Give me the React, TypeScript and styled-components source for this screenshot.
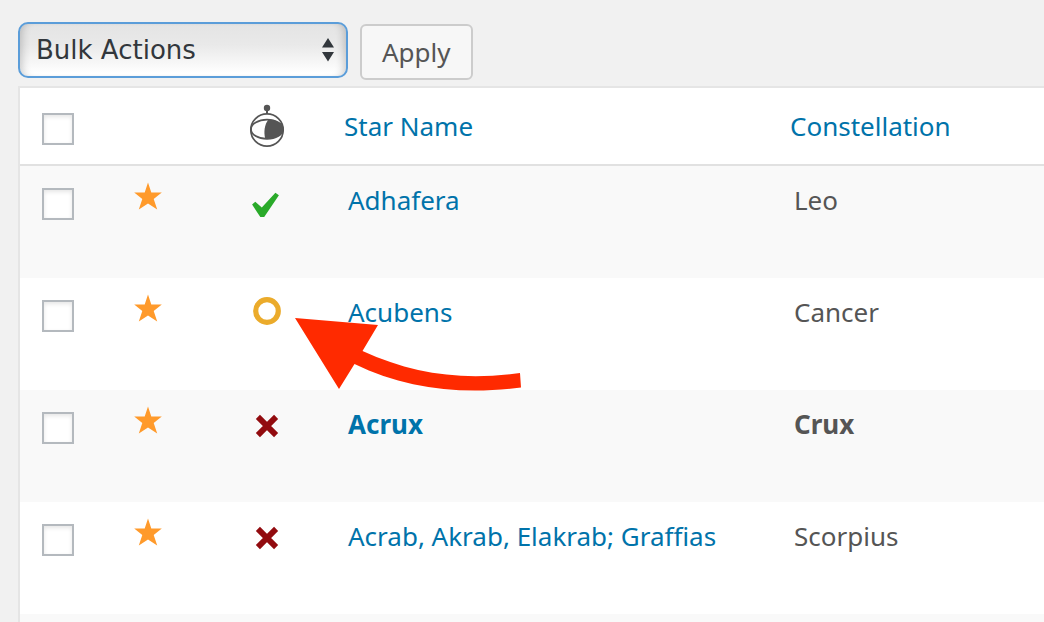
import React from 'react';
import styled, { createGlobalStyle } from 'styled-components';

const GlobalStyle = createGlobalStyle`
  *, *::before, *::after { box-sizing: border-box; }
  body {
    margin: 0;
    background: #f1f1f1;
    color: #555;
    font-family: "Noto Sans", "Open Sans", sans-serif;
    font-size: 26px;
    line-height: 36px;
  }
`;

const Page = styled.main`
  display: flex;
  flex-direction: column;
  min-height: 100vh;
  padding: 22px 0 0 18px;
`;

const Toolbar = styled.form`
  display: flex;
  align-items: flex-start;
  gap: 12px;
  height: 64px;
`;

const SelectBox = styled.label`
  position: relative;
  display: block;
  width: 330px;
`;

const Select = styled.select`
  display: block;
  width: 100%;
  height: 56px;
  padding: 0 48px 0 16px;
  appearance: none;
  border: 2px solid #5b9dd9;
  border-radius: 10px;
  background: linear-gradient(#e4e4e4, #e9e9e9 40%, #fff 95%);
  box-shadow: inset 8px 0 8px -6px rgba(0, 0, 0, 0.2), inset -8px 0 8px -6px rgba(0, 0, 0, 0.2);
  color: #32373c;
  font: 26px "DejaVu Sans", sans-serif;
  outline: none;
`;

const SelectArrows = styled.svg`
  position: absolute;
  right: 14px;
  top: 16px;
  width: 12px;
  height: 24px;
  fill: #32373c;
  pointer-events: none;
`;

const ApplyButton = styled.button`
  height: 56px;
  margin-top: 2px;
  padding: 0 20px;
  border: 2px solid #ccc;
  border-radius: 6px;
  background: #f7f7f7;
  color: #555;
  font: inherit;
`;

const Panel = styled.section`
  flex: 1;
  border: solid #e5e5e5;
  border-width: 2px 0 0 2px;
  background: #f9f9f9;
`;

const Table = styled.table`
  width: 100%;
  table-layout: fixed;
  border-spacing: 0;
`;

const Col = styled.col<{ $width?: number }>`
  width: ${(p) => (p.$width ? `${p.$width}px` : 'auto')};
`;

const HeadCell = styled.th<{ $kind?: 'check' | 'icon' }>`
  height: 78px;
  padding: ${(p) => (p.$kind === 'check' ? '25px 0 0 22px' : p.$kind === 'icon' ? '16px 0 0' : '20px 16px 0')};
  border-bottom: 2px solid #e1e1e1;
  background: #fff;
  font-weight: 400;
  text-align: ${(p) => (p.$kind === 'icon' ? 'center' : 'left')};
  vertical-align: top;
`;

const Row = styled.tr<{ $strong?: boolean }>`
  background: #fff;
  font-weight: ${(p) => (p.$strong ? 700 : 400)};
  &:nth-child(odd) { background: #f9f9f9; }
`;

const Cell = styled.td<{ $kind?: 'check' | 'icon' }>`
  height: 112px;
  padding: ${(p) => (p.$kind === 'check' ? '22px 0 0 22px' : p.$kind === 'icon' ? '16px 0 0' : '16px 20px 0')};
  text-align: ${(p) => (p.$kind === 'icon' ? 'center' : 'left')};
  vertical-align: top;
  white-space: nowrap;
`;

const Checkbox = styled.input`
  display: block;
  width: 32px;
  height: 32px;
  margin: 0;
  appearance: none;
  border: 2px solid #b4b9be;
  background: #fff;
  box-shadow: inset 0 2px 4px rgba(0, 0, 0, 0.1);
`;

const Link = styled.a`
  color: #0073aa;
  text-decoration: none;
`;

const StarButton = styled.button`
  display: block;
  width: 28px;
  height: 28px;
  margin: 0 auto;
  padding: 0;
  border: 0;
  background: none;
`;

const Glyph = styled.svg<{ $w: number; $h: number }>`
  display: block;
  width: ${(p) => p.$w}px;
  height: ${(p) => p.$h}px;
  margin: 0 auto;
`;

const StatusMark = styled.div`
  position: relative;
  width: 30px;
  margin: 0 auto;
`;

const Pointer = styled.svg`
  position: absolute;
  left: 42px;
  top: 22px;
  width: 230px;
  height: 76px;
  fill: #ff2a00;
  pointer-events: none;
`;

type Status = 'yes' | 'partial' | 'no';

const stars: { name: string; constellation: string; status: Status; strong?: boolean; pointed?: boolean }[] = [
  { name: 'Adhafera', constellation: 'Leo', status: 'yes' },
  { name: 'Acubens', constellation: 'Cancer', status: 'partial', pointed: true },
  { name: 'Acrux', constellation: 'Crux', status: 'no', strong: true },
  { name: 'Acrab, Akrab, Elakrab; Graffias', constellation: 'Scorpius', status: 'no' },
];

function Globe() {
  return (
    <Glyph $w={36} $h={44} viewBox="0 0 36 44" role="img" aria-label="Status">
      <circle cx="18" cy="4" r="3.2" fill="#555" />
      <path d="M18 4v6" stroke="#555" strokeWidth="2" />
      <circle cx="18" cy="26" r="16.2" fill="none" stroke="#555" strokeWidth="1.7" />
      <ellipse cx="18" cy="25.2" rx="16" ry="9.6" fill="none" stroke="#555" strokeWidth="1.7" />
      <path d="M19.5 15.6C28 15.8 34 20 34.5 25.2C34 30.5 28 34.6 16.2 34.8C14.5 28 15.5 20.5 19.5 15.6Z" fill="#555" />
    </Glyph>
  );
}

function StatusIcon({ status }: { status: Status }) {
  return (
    <Glyph $w={30} $h={36} viewBox="0 0 30 36" role="img" aria-label={status}>
      {status === 'yes' && (
        <path d="M.1 22.5L3.3 19.8L9.8 25.6L23.4 10.7L26.9 13.3L12.2 35H8.3Z" fill="#2aaa2a" />
      )}
      {status === 'partial' && <circle cx="15" cy="17" r="11.3" fill="none" stroke="#ebab2b" strokeWidth="5.2" />}
      {status === 'no' && (
        <path d="M5.9 10.9L24.1 29.1M24.1 10.9L5.9 29.1" fill="none" stroke="#920b0f" strokeWidth="5.8" />
      )}
    </Glyph>
  );
}

export default function App() {
  return (
    <>
      <GlobalStyle />
      <Page>
        <Toolbar onSubmit={(e) => e.preventDefault()}>
          <SelectBox>
            <Select aria-label="Select bulk action">
              <option>Bulk Actions</option>
            </Select>
            <SelectArrows viewBox="0 0 12 24" aria-hidden="true">
              <path d="M0 9.5L6 0L12 9.5ZM0 14L6 23.5L12 14Z" />
            </SelectArrows>
          </SelectBox>
          <ApplyButton type="submit">Apply</ApplyButton>
        </Toolbar>
        <Panel>
          <Table>
            <colgroup>
              <Col $width={70} />
              <Col $width={116} />
              <Col $width={122} />
              <Col />
              <Col $width={270} />
            </colgroup>
            <thead>
              <tr>
                <HeadCell $kind="check"><Checkbox type="checkbox" aria-label="Select all" /></HeadCell>
                <HeadCell $kind="icon" />
                <HeadCell $kind="icon"><Globe /></HeadCell>
                <HeadCell><Link href="#name">Star Name</Link></HeadCell>
                <HeadCell><Link href="#constellation">Constellation</Link></HeadCell>
              </tr>
            </thead>
            <tbody>
              {stars.map((s) => (
                <Row key={s.name} $strong={s.strong}>
                  <Cell $kind="check"><Checkbox type="checkbox" aria-label={`Select ${s.name}`} /></Cell>
                  <Cell $kind="icon">
                    <StarButton type="button" aria-label={`Favourite ${s.name}`}>
                      <Glyph $w={28} $h={28} viewBox="0 0 28 28" aria-hidden="true">
                        <path d="M14 .5L17.3 10.4H27.8L19.7 17L23.2 27.6L14 21.4L4.8 27.6L8.3 17L.2 10.4H10.7Z" fill="#ff9a2b" />
                      </Glyph>
                    </StarButton>
                  </Cell>
                  <Cell $kind="icon">
                    <StatusMark>
                      <StatusIcon status={s.status} />
                      {s.pointed && (
                        <Pointer viewBox="0 0 230 76" aria-hidden="true">
                          <path d="M1 2L84 9L68.500 35C119 58 168 65 226 57L227 71.500C168 79 112 73 60.500 48L45 73Z" />
                        </Pointer>
                      )}
                    </StatusMark>
                  </Cell>
                  <Cell><Link href={`#${s.constellation}`}>{s.name}</Link></Cell>
                  <Cell>{s.constellation}</Cell>
                </Row>
              ))}
            </tbody>
          </Table>
        </Panel>
      </Page>
    </>
  );
}
